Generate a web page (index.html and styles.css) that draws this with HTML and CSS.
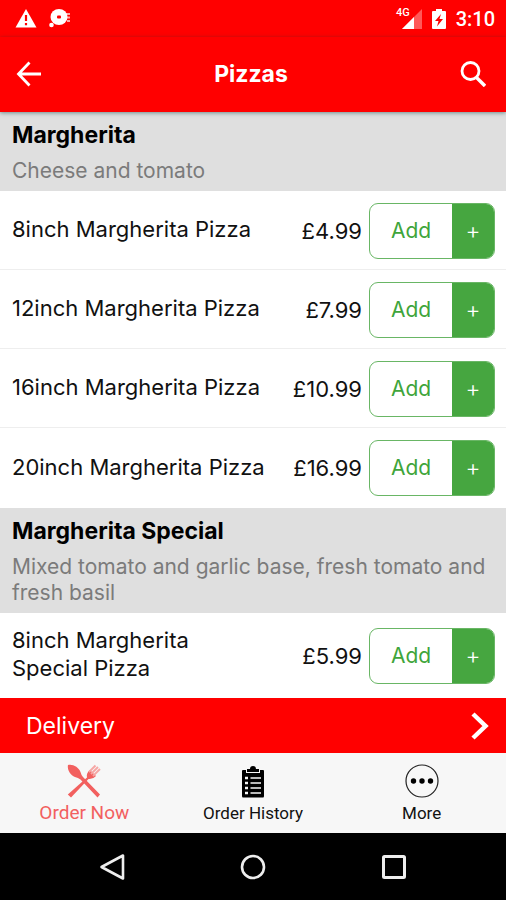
FILE: index.html
```html
<!DOCTYPE html>
<html lang="en">
<head>
<meta charset="utf-8">
<meta name="viewport" content="width=device-width, initial-scale=1">
<title>Pizzas</title>
<link rel="stylesheet" href="styles.css">
</head>
<body>
<div class="status">
  <svg class="icon-status" viewBox="0 0 22 20" aria-hidden="true"><path d="M11 0L21.500 18.500H0.500Z" fill="#fff"/><path d="M11 6v6M11 14v2.200" stroke="#f00" stroke-width="2.200"/></svg>
  <svg class="icon-status" viewBox="0 0 22 20" aria-hidden="true"><ellipse cx="10" cy="8" rx="8.500" ry="8" fill="#fff"/><circle cx="2.500" cy="16" r="2.300" fill="#fff"/><rect x="8" y="6.500" width="4" height="3" rx="1" fill="#f00"/><path d="M17 5h4M17 8.500h4M18 12h3" stroke="#fff" stroke-width="1.800" opacity=".65"/></svg>
  <span class="status-right">
    <span class="signal"><span class="network">4G</span><svg class="icon-signal" viewBox="0 0 20 20" aria-hidden="true"><path d="M20 0V20H0Z" fill="#fff" opacity=".35"/><path d="M12 8V20H0Z" fill="#fff"/></svg></span>
    <svg class="icon-battery" viewBox="0 0 14 20" aria-hidden="true"><path d="M4 0h6v2h3q1 0 1 1v16q0 1-1 1H1q-1 0-1-1V3q0-1 1-1h3Z" fill="#fff"/><path d="M9 5L3 12h3.500L5 17.500L11 10H7.500Z" fill="#f00"/></svg>
    <span>3:10</span>
  </span>
</div>
<header class="appbar">
  <button class="icon-button" aria-label="Back"><svg class="icon-bar" viewBox="0 0 26 26" fill="none" stroke="#fff" stroke-width="2.800" aria-hidden="true"><path d="M25 13H3M13.500 1.500L2.500 13L13.500 24.500"/></svg></button>
  <h1 class="title">Pizzas</h1>
  <button class="icon-button" aria-label="Search"><svg class="icon-bar" viewBox="0 0 26 26" fill="none" stroke="#fff" aria-hidden="true"><circle cx="10.500" cy="10" r="8.500" stroke-width="2.800"/><path d="M16 16L25 25" stroke-width="3.400"/></svg></button>
</header>
<main class="menu">
  <section>
    <div class="group"><h2 class="group-name">Margherita</h2><p class="group-text">Cheese and tomato</p></div>
    <ul class="items">
      <li class="item"><span class="name">8inch Margherita Pizza</span><span class="price">£4.99</span><button class="add"><span class="add-label">Add</span><span class="plus">+</span></button></li>
      <li class="item"><span class="name">12inch Margherita Pizza</span><span class="price">£7.99</span><button class="add"><span class="add-label">Add</span><span class="plus">+</span></button></li>
      <li class="item"><span class="name">16inch Margherita Pizza</span><span class="price">£10.99</span><button class="add"><span class="add-label">Add</span><span class="plus">+</span></button></li>
      <li class="item"><span class="name">20inch Margherita Pizza</span><span class="price">£16.99</span><button class="add"><span class="add-label">Add</span><span class="plus">+</span></button></li>
    </ul>
  </section>
  <section>
    <div class="group"><h2 class="group-name">Margherita Special</h2><p class="group-text">Mixed tomato and garlic base, fresh tomato and fresh basil</p></div>
    <ul class="items">
      <li class="item"><span class="name">8inch Margherita Special Pizza</span><span class="price">£5.99</span><button class="add"><span class="add-label">Add</span><span class="plus">+</span></button></li>
    </ul>
  </section>
</main>
<button class="delivery"><span>Delivery</span><svg class="icon-chevron" viewBox="0 0 18 28" fill="none" stroke="#fff" stroke-width="4.500" aria-hidden="true"><path d="M2 2L14.500 14L2 26"/></svg></button>
<nav class="tabs">
  <a class="tab active" href="#order"><svg class="icon-tab" viewBox="0 0 34 34" aria-hidden="true"><g fill="#f2605f"><path d="M1 1C5-.5 12 3 13.500 8Q14 10.500 16 13L33 30.500L30.500 33.500L13.500 15.500Q11 13.500 8 13C3 11 0 5 1 1Z"/><path d="M4 33.500L.8 30.500L20 13.500Q19 9 23 6L26 9L29 12Q26 15.500 21.500 15Z"/></g><path d="M22 8L28.500 1.500M24 10L31 3M26 12L33 5" stroke="#f6a6a4" stroke-width="1.900"/></svg><span>Order Now</span></a>
  <a class="tab" href="#history"><svg class="icon-tab" viewBox="0 0 34 34" aria-hidden="true"><path d="M7 6h3v3h14V6h3q1 0 1 1v25q0 1.500-1 1.500H7Q6 33.500 6 32V7q0-1 1-1Z"/><path d="M11 8V5h3q0-3 3-3t3 3h3v3Z"/><path d="M9 14h3M9 19h3M9 24h3M9 29h3" stroke="#f7f7f7" stroke-width="2.600"/><path d="M14.500 14H25M14.500 19H25M14.500 24H25M14.500 29H25" stroke="#f7f7f7" stroke-width="1.500"/></svg><span>Order History</span></a>
  <a class="tab" href="#more"><svg class="icon-tab" viewBox="0 0 34 34" aria-hidden="true"><circle cx="17" cy="17" r="16" fill="none" stroke="#222" stroke-width="1.200"/><circle cx="8.500" cy="17" r="2.700"/><circle cx="17" cy="17" r="2.700"/><circle cx="25.500" cy="17" r="2.700"/></svg><span>More</span></a>
</nav>
<div class="system">
  <button class="icon-button" aria-label="System back"><svg class="icon-bar" viewBox="0 0 26 26" fill="none" stroke="#eee" stroke-width="2.600" stroke-linejoin="round" aria-hidden="true"><path d="M24 1.500V24.500L2.500 13Z"/></svg></button>
  <button class="icon-button" aria-label="Home"><svg class="icon-bar" viewBox="0 0 26 26" fill="none" stroke="#eee" stroke-width="2.600" aria-hidden="true"><circle cx="13" cy="13" r="11"/></svg></button>
  <button class="icon-button" aria-label="Recent apps"><svg class="icon-bar" viewBox="0 0 26 26" fill="none" stroke="#eee" stroke-width="3" aria-hidden="true"><rect x="2.500" y="2.500" width="21" height="21" rx="1"/></svg></button>
</div>
</body>
</html>
```
FILE: styles.css
```css
* { box-sizing: border-box; }
body {
  margin: 0;
  min-height: 100vh;
  display: flex;
  flex-direction: column;
  font-family: Inter, "Open Sans", sans-serif;
  font-size: 21px;
  color: #111;
  background: #fff;
}
h1, h2, p, ul { margin: 0; padding: 0; }
button { font: inherit; color: inherit; border: 0; padding: 0; background: none; }
svg { display: block; flex: none; }

.status {
  display: flex;
  align-items: center;
  gap: 12px;
  height: 37px;
  padding: 0 11px 0 15px;
  background: #f00;
  color: #fff;
  font: 500 20px/24px Roboto, sans-serif;
}
.status-right { margin-left: auto; display: flex; align-items: center; gap: 10px; }
.icon-status { width: 22px; height: 20px; }
.icon-battery { width: 14px; height: 20px; }
.icon-signal { width: 20px; height: 20px; }
.signal { position: relative; }
.network { position: absolute; right: 12px; top: -3px; font-size: 11px; line-height: 14px; }

.appbar {
  position: relative;
  display: flex;
  align-items: center;
  justify-content: space-between;
  height: 75px;
  padding: 0 20px 2px 16px;
  background: #f00;
  color: #fff;
  box-shadow: 0 1px 4px rgba(0, 60, 60, .5);
}
.title { font-size: 23px; line-height: 28px; font-weight: 700; }
.icon-bar { width: 26px; height: 26px; }

.menu { flex: 1; }
.group { padding: 9px 12px 7px; background: #dfdfdf; }
.group-name { margin-bottom: 9px; font-size: 23px; line-height: 28px; font-weight: 700; color: #000; }
.group-text { line-height: 26px; color: #7b7b7b; }
.items { list-style: none; }
.item {
  display: flex;
  align-items: center;
  min-height: 79px;
  padding: 1px 11px 0 12px;
  border-bottom: 1px solid #eee;
}
.item:last-child { min-height: 80px; border-bottom-color: #fff; }
.name { flex: 1; padding: 12px 0 15px; font-size: 22px; line-height: 28px; }
.price { width: 102px; padding-right: 7px; text-align: right; font-size: 22px; }
.add {
  display: flex;
  width: 126px;
  height: 56px;
  border: 1px solid #69b665;
  border-radius: 9px;
  overflow: hidden;
  line-height: 54px;
}
.add-label { flex: 1; color: #3fa53b; }
.plus { width: 42px; background: #46a640; color: #fff; font-size: 23px; font-weight: 300; }

.delivery {
  display: flex;
  align-items: center;
  justify-content: space-between;
  height: 55px;
  padding: 0 17px 0 26px;
  background: #f00;
  color: #fff;
  font-size: 23px;
}
.icon-chevron { width: 18px; height: 28px; }

.tabs { display: grid; grid-template-columns: repeat(3, 1fr); height: 80px; background: #f7f7f7; }
.tab {
  display: flex;
  flex-direction: column;
  align-items: center;
  padding-top: 11px;
  gap: 3px;
  color: #111;
  text-decoration: none;
  font: 17px/24px Roboto, sans-serif;
}
.active { color: #f2605f; font-size: 19px; }
.icon-tab { width: 34px; height: 34px; }

.system {
  display: flex;
  align-items: center;
  justify-content: center;
  gap: 115px;
  height: 67px;
  background: #000;
}
```
